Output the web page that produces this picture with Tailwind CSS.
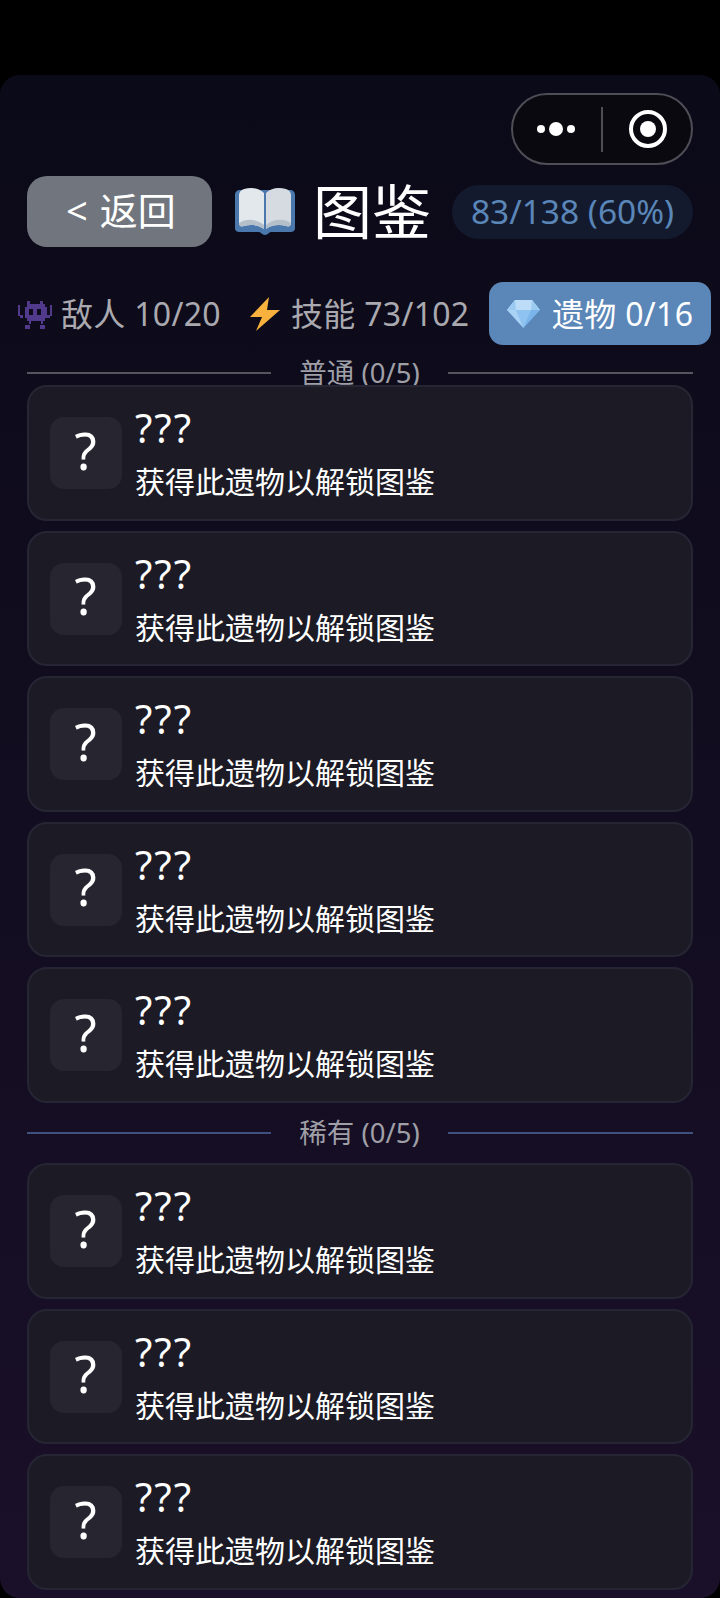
<!DOCTYPE html>
<html lang="zh-CN">
<head>
  <meta charset="UTF-8">
  <meta name="viewport" content="width=device-width, initial-scale=1.0">
  <title>图鉴</title>
  <script src="https://cdn.jsdelivr.net/npm/@tailwindcss/browser@4"></script>
</head>
<body class="bg-black">
  <main class="relative mt-[75px] h-[1523px] overflow-hidden rounded-[20px] bg-gradient-to-b from-[#0b0a18] to-[#1a1029] font-['Noto_Sans','Noto_Sans_CJK_SC',sans-serif]">
    <!-- capsule -->
    <div class="absolute left-[511px] top-[18px] flex h-[72px] w-[182px] items-center rounded-full border-2 border-[#4f4d55] bg-[#09090f]">
      <div class="flex w-[88px] items-center justify-center gap-[4px] pr-[2px]">
        <span class="size-[8px] rounded-full bg-white"></span>
        <span class="size-[14px] rounded-full bg-white"></span>
        <span class="size-[8px] rounded-full bg-white"></span>
      </div>
      <div class="h-[45px] w-[2px] bg-[#4f4d55]"></div>
      <div class="ml-[26px] flex size-[38px] items-center justify-center rounded-full border-[4px] border-white">
        <span class="size-[16px] rounded-full bg-white"></span>
      </div>
    </div>

    <header class="flex items-center pl-[27px] pt-[101px]">
      <button class="flex h-[71px] w-[185px] items-center justify-center gap-[12px] rounded-[20px] bg-[#71767e] pb-[3px] pl-[3px] text-[38px] leading-none text-white"><span>&lt;</span><span>返回</span></button>
      <svg class="ml-[22px] h-[50px] w-[62px]" viewBox="0 0 62 50">
        <path d="M1 8c0-3 2-5 5-5h50c3 0 5 2 5 5v33c0 3-2 4-5 4H37c-2 0-3 3-6 3s-4-3-6-3H6c-3 0-5-1-5-4z" fill="#4a78ad"/>
        <path d="M5 8c0-3 2-5 5-6 8-2 15-1 20 4v36c-5-4-13-5-20-3-3 1-5 0-5-3z" fill="#e3e8ed"/>
        <path d="M57 8c0-3-2-5-5-6-8-2-15-1-20 4v36c5-4 13-5 20-3 3 1 5 0 5-3z" fill="#d5dbe1"/>
        <path d="M5 36c8-5 18-4 25 2v4c-5-4-13-5-20-3-3 1-5 0-5-3zM57 36c-8-5-18-4-25 2v4c5-4 13-5 20-3 3 1 5 0 5-3z" fill="#b4bfc9"/>
      </svg>
      <h1 class="ml-[17px] text-[59px] leading-none text-white">图鉴</h1>
      <div class="ml-[21px] flex h-[54px] w-[241px] items-center justify-center rounded-full bg-[#141a2e] text-[33.500px] leading-none text-[#5a86b8]">83/138 (60%)</div>
    </header>

    <nav class="mt-[35px] flex h-[63px] items-center pl-[18px] text-[32px] tracking-[0.3px] text-[#a9a9af]">
      <svg class="h-[32px] w-[34px]" viewBox="0 0 34 32" fill="#51398c">
        <path d="M9 3h3v3h10V3h3v3h2v3h2v11h-2v3h-2v3h-2v-3H13v3h-2v-3H9v-3H7V9h2V6z"/>
        <path d="M0 7h2v10h3v3H2v-2H0zM32 7h2v11h-2v2h-3v-3h3zM7 27h5v4H7zM22 27h5v4h-5z"/>
        <path d="M11 11h4v6h-4zM19 11h4v6h-4z" fill="#0d0b1a"/>
      </svg>
      <span class="ml-[9px] w-[189px] whitespace-nowrap">敌人 10/20</span>
      <svg class="h-[34px] w-[30px]" viewBox="0 0 30 34"><path d="M19 0 0 20h12L6 34l24-21H17z" fill="#f8b13d"/></svg>
      <span class="ml-[11px] w-[198px] whitespace-nowrap">技能 73/102</span>
      <div class="flex h-[63px] w-[222px] items-center rounded-[14px] bg-[#5a86b8] pl-[18px] text-white">
        <svg class="h-[28px] w-[33px]" viewBox="0 0 33 28">
          <path d="M8 0h17l8 10-16.500 18L0 10z" fill="#7ab4ea"/>
          <path d="M8 0h17l8 10H0z" fill="#bcdcf7"/>
          <path d="M8 0 0 10h9zM25 0l8 10h-9z" fill="#9ccbf2"/>
          <path d="M9 10h15l-7.500 18z" fill="#8fc3f0"/>
          <path d="M0 10h9l7.500 18z" fill="#a9d2f5"/>
        </svg>
        <span class="ml-[12px] whitespace-nowrap">遗物 0/16</span>
      </div>
    </nav>

    <section id="list" class="mt-[16px] px-[27px]">
      <div class="flex h-[24px] items-center justify-between">
        <div class="h-[2px] w-[244px] bg-[#55545f]"></div>
        <span class="text-[27.500px] leading-none text-[#9f9fa6]">普通 (0/5)</span>
        <div class="h-[2px] w-[245px] bg-[#55545f]"></div>
      </div>
      <div id="common" class="relative flex flex-col gap-[10px]"></div>
      <div class="mb-[18px] mt-[18.500px] flex h-[24px] items-center justify-between">
        <div class="h-[2px] w-[244px] bg-[#3f4f80]"></div>
        <span class="text-[27.500px] leading-none text-[#9f9fa6]">稀有 (0/5)</span>
        <div class="h-[2px] w-[245px] bg-[#3f4f80]"></div>
      </div>
      <div id="rare" class="relative flex flex-col gap-[10px]"></div>
    </section>
  </main>

  <script>
    const card = `
      <div class="flex h-[135.500px] shrink-0 items-start rounded-[20px] border-2 border-[#252534] bg-[#1c1b25] pl-[20.500px]">
        <div class="mt-[30px] flex size-[72px] items-center justify-center rounded-[14px] bg-[#272530] pb-[6px] text-[51px] leading-none text-white">?</div>
        <div class="ml-[13.500px] text-white">
          <div class="mt-[18px] text-[40px] leading-[46px] tracking-[2px]">???</div>
          <div class="mt-[8px] text-[30px] leading-[46px]">获得此遗物以解锁图鉴</div>
        </div>
      </div>`;
    document.getElementById('common').innerHTML = card.repeat(5);
    document.getElementById('rare').innerHTML = card.repeat(3);
  </script>
</body>
</html>
